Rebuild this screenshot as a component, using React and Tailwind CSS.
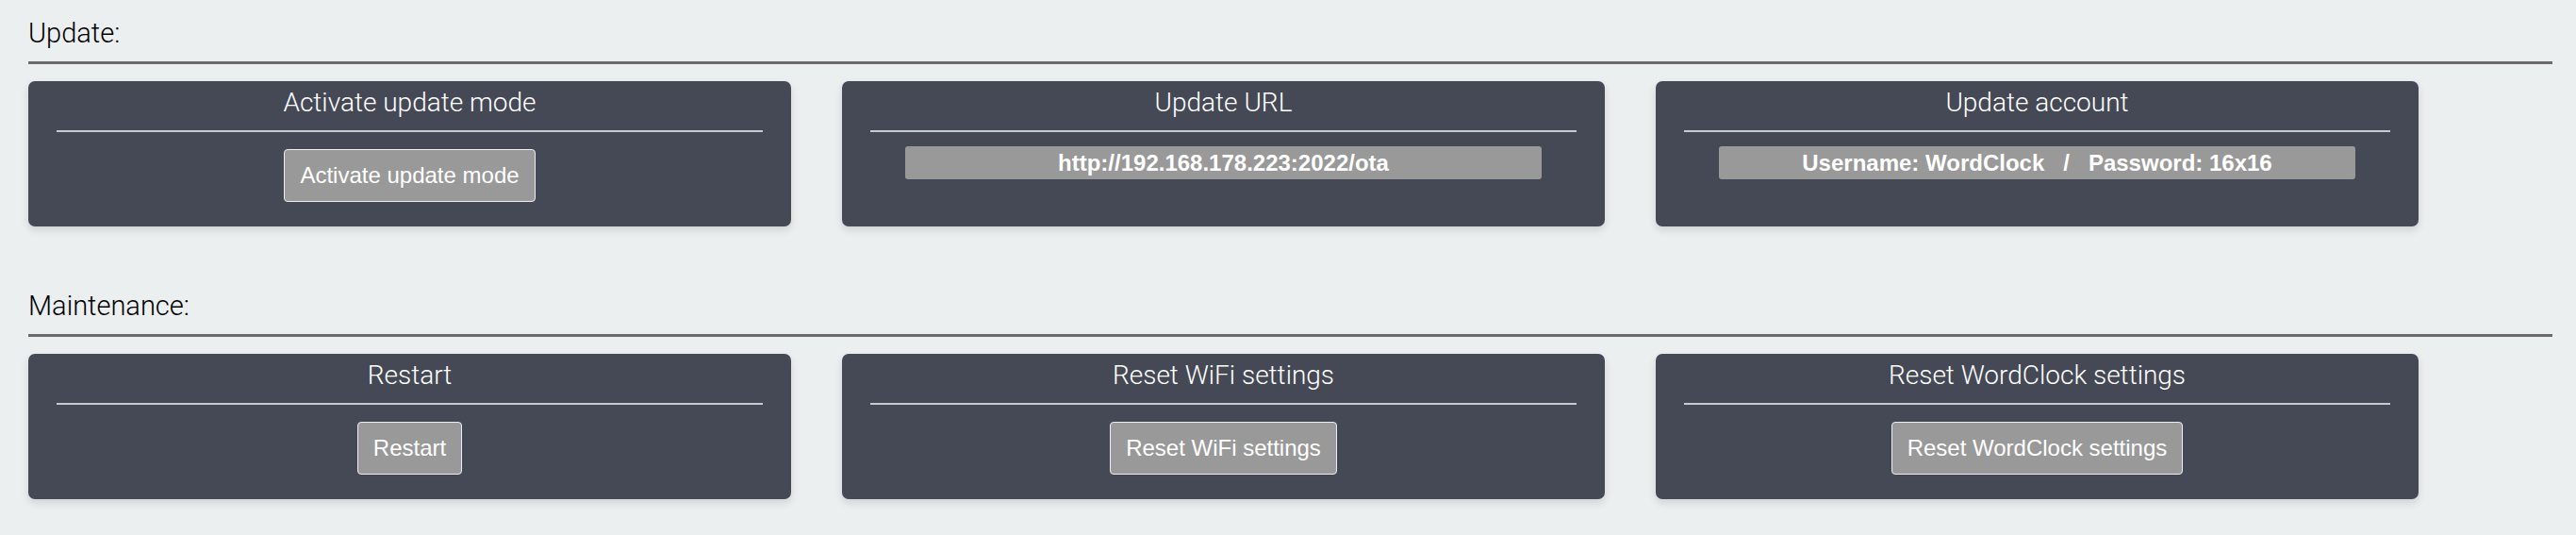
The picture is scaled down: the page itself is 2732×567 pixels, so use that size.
import React from "react";

function Card({ title, children }) {
  return (
    <div className="w-[809px] h-[154px] shrink-0 rounded-[7px] bg-[#454955] shadow-[0_4px_8px_rgba(0,0,0,0.12)] pt-[7px] flex flex-col">
      <div className="text-center text-white text-[28px] leading-[32px] font-light font-['Roboto','Liberation_Sans',sans-serif]">
        {title}
      </div>
      <div className="mx-[30px] mt-[13px] h-[2px] bg-[#c9cacd]" />
      {children}
    </div>
  );
}

function Btn({ children }) {
  return (
    <div className="flex justify-center mt-[18px]">
      <button className="h-[56px] px-[16px] rounded-[4px] border border-[#eeeeee] bg-[#999999] text-white text-[24px] font-['Liberation_Sans',Arial,sans-serif]">
        {children}
      </button>
    </div>
  );
}

function Bar({ children }) {
  return (
    <div className="mx-auto mt-[15px] w-[675px] h-[35px] rounded-[3px] bg-[#999999] flex items-center justify-center text-white font-bold text-[24px] whitespace-pre font-['Liberation_Sans',Arial,sans-serif]">
      {children}
    </div>
  );
}

function Section({ title, className = "", children }) {
  return (
    <div className={className}>
      <div className="text-[29px] leading-[34px] font-light text-black font-['Roboto','Liberation_Sans',sans-serif]">
        {title}
      </div>
      <div className="mt-[13px] h-[3px] bg-[#6b6b6b]" />
      <div className="mt-[18px] flex gap-[54px]">{children}</div>
    </div>
  );
}

export default function App() {
  return (
    <div className="min-h-[567px] bg-[#ebeff0] pl-[30px] pr-[25px] pt-[18px]">
      <Section title="Update:">
        <Card title="Activate update mode">
          <Btn>Activate update mode</Btn>
        </Card>
        <Card title="Update URL">
          <Bar>http://192.168.178.223:2022/ota</Bar>
        </Card>
        <Card title="Update account">
          <Bar>{"Username: WordClock   /   Password: 16x16"}</Bar>
        </Card>
      </Section>
      <Section title="Maintenance:" className="mt-[67px]">
        <Card title="Restart">
          <Btn>Restart</Btn>
        </Card>
        <Card title="Reset WiFi settings">
          <Btn>Reset WiFi settings</Btn>
        </Card>
        <Card title="Reset WordClock settings">
          <Btn>Reset WordClock settings</Btn>
        </Card>
      </Section>
    </div>
  );
}
